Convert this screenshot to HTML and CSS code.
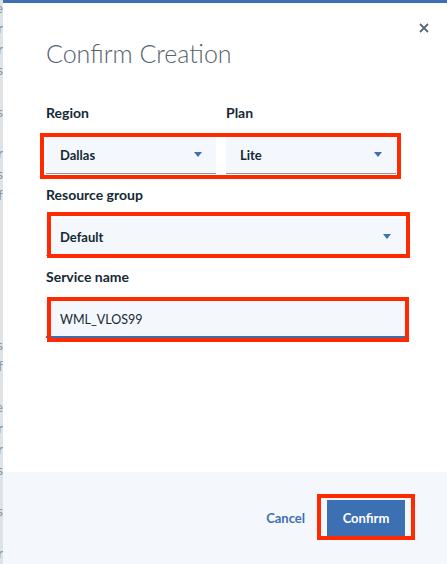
FILE: index.html
```html
<!DOCTYPE html>
<html lang="en">
<head>
<meta charset="utf-8">
<title>Confirm Creation</title>
<link rel="stylesheet" href="styles.css">
</head>
<body>
<div class="page">
  <div class="behind">
    <div class="ln">e</div><div class="ln">r</div><div class="ln">r</div><div class="ln">s</div><div class="ln"></div><div class="ln">s</div><div class="ln"></div><div class="ln">r</div><div class="ln">s</div><div class="ln">f</div>
    <div class="gap"></div>
    <div class="ln">s</div><div class="ln">f</div><div class="ln"></div><div class="ln">e</div><div class="ln">r</div><div class="ln">r</div><div class="ln">s</div><div class="ln"></div><div class="ln">s</div><div class="ln"></div><div class="ln">r</div>
  </div>
  <div class="modal">
    <div class="topbar"></div>
    <div class="header">
      <h1 class="title">Confirm Creation</h1>
      <button class="close" aria-label="Close">
        <svg width="10" height="10" viewBox="0 0 10 10"><path d="M1 1 L9 9 M9 1 L1 9" stroke="#5a6872" stroke-width="1.8" fill="none"/></svg>
      </button>
    </div>
    <div class="form">
      <div class="row2">
        <div class="field">
          <div class="label">Region</div>
          <div class="select"><span>Dallas</span><span class="caret"></span></div>
        </div>
        <div class="field">
          <div class="label">Plan</div>
          <div class="select"><span>Lite</span><span class="caret"></span></div>
        </div>
      </div>
      <div class="field">
        <div class="label">Resource group</div>
        <div class="select"><span>Default</span><span class="caret"></span></div>
      </div>
      <div class="field">
        <div class="label">Service name</div>
        <div class="input">WML_VLOS99</div>
      </div>
    </div>
    <div class="footer">
      <button class="btn-ghost">Cancel</button>
      <button class="btn-primary">Confirm</button>
    </div>
  </div>
  <div class="mark mark-row"></div>
  <div class="mark mark-group"></div>
  <div class="mark mark-name"></div>
  <div class="mark mark-confirm"></div>
</div>
</body>
</html>
```

FILE: styles.css
```css
* { box-sizing: border-box; }
html, body { margin: 0; padding: 0; }
body {
  width: 447px;
  height: 564px;
  overflow: hidden;
  font-family: Lato, "Liberation Sans", sans-serif;
  color: #152935;
  background: #ffffff;
}
.page {
  position: relative;
  display: flex;
  width: 447px;
  height: 564px;
}
.behind {
  width: 3px;
  flex: none;
  background: #dfe3e6;
  overflow: hidden;
  display: flex;
  flex-direction: column;
}
.behind .ln {
  height: 20.8px;
  line-height: 20.8px;
  display: flex;
  justify-content: flex-end;
  font-size: 14px;
  color: #8a97a0;
  flex: none;
}
.behind .ln:first-child { margin-top: -2.4px; }
.behind .gap { height: 129.2px; flex: none; }

.modal {
  flex: 1;
  display: flex;
  flex-direction: column;
  background: #ffffff;
}
.topbar {
  height: 3px;
  background: #3d70b2;
  flex: none;
}
.header {
  display: flex;
  justify-content: space-between;
  align-items: flex-start;
  padding: 20px 18px 0 43px;
}
.title {
  margin: 15px 0 0 0;
  font-size: 25px;
  line-height: 30px;
  font-weight: 300;
  color: #55636e;
}
.close {
  border: 0;
  background: none;
  padding: 0;
  width: 10px;
  height: 10px;
  display: flex;
}
.form {
  margin-top: 36px;
  padding-left: 43px;
  display: flex;
  flex-direction: column;
  gap: 12px;
}
.row2 {
  display: grid;
  grid-template-columns: 170px 170px;
  column-gap: 10px;
}
.field {
  display: flex;
  flex-direction: column;
  width: 359px;
}
.row2 .field { width: 170px; }
.label {
  font-size: 14px;
  line-height: 18px;
  font-weight: 700;
  color: #152935;
  margin-bottom: 14px;
}
.select {
  height: 38px;
  background: #f4f7fb;
  border-bottom: 1px solid #8c9ba5;
  display: flex;
  align-items: center;
  justify-content: space-between;
  padding: 0 14px;
  font-size: 13px;
  font-weight: 700;
  color: #152935;
}
.caret {
  width: 0;
  height: 0;
  border-left: 4.5px solid transparent;
  border-right: 4.5px solid transparent;
  border-top: 5px solid #3d70b2;
}
.input {
  height: 38px;
  background: #f4f7fb;
  border-bottom: 2px solid #3d70b2;
  display: flex;
  align-items: center;
  padding: 2px 14px 0 14px;
  font-size: 12.5px;
  font-weight: 400;
  color: #152935;
}
.footer {
  margin-top: auto;
  height: 92px;
  background: #f4f7fb;
  display: flex;
  justify-content: flex-end;
  align-items: center;
  padding-right: 42px;
  gap: 22px;
}
.btn-ghost {
  border: 0;
  background: none;
  padding: 0;
  font-family: inherit;
  font-size: 13px;
  font-weight: 700;
  color: #3d70b2;
}
.btn-primary {
  border: 0;
  background: #3d70b2;
  color: #ffffff;
  font-family: inherit;
  font-size: 13px;
  font-weight: 700;
  width: 78px;
  height: 36px;
  padding: 0;
}
.mark {
  position: absolute;
  border: 4.5px solid #ff2a00;
  pointer-events: none;
}
.mark-row { left: 40px; top: 133px; width: 361px; height: 46px; }
.mark-group { left: 47px; top: 212px; width: 363px; height: 46px; }
.mark-name { left: 47px; top: 297px; width: 362px; height: 45px; }
.mark-confirm { left: 317px; top: 494px; width: 98px; height: 46px; }
```
